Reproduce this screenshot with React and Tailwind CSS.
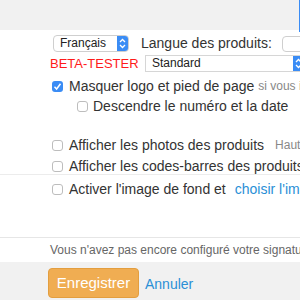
import React from "react";

const Stepper = () => (
  <div className="w-[11px] shrink-0 flex items-center justify-center bg-[#3a8cf5]">
    <svg width="7" height="11" viewBox="0 0 7 11" fill="none" stroke="white" strokeWidth="1.3">
      <path d="M1 4 L3.5 1.5 L6 4" />
      <path d="M1 7 L3.5 9.5 L6 7" />
    </svg>
  </div>
);

const Checkbox = ({ checked }) =>
  checked ? (
    <div className="w-[11px] h-[11px] rounded-[3px] bg-[#3a8cf5] flex items-center justify-center shrink-0">
      <svg width="9" height="9" viewBox="0 0 9 9" fill="none" stroke="white" strokeWidth="1.5">
        <path d="M1.5 4.8 L3.6 7 L7.5 1.8" />
      </svg>
    </div>
  ) : (
    <div className="w-[11px] h-[11px] rounded-[3px] border border-[#bdbdbd] bg-white shrink-0" />
  );

export default function App() {
  return (
    <div className="relative w-[300px] h-[300px] overflow-hidden bg-white whitespace-nowrap text-[#333] font-['Liberation_Sans',Arial,sans-serif]">
      {/* top band */}
      <div className="h-[30px] bg-[#f1f1f1]" />

      {/* langue */}
      <div className="mt-[5px] h-[17px] flex items-center pl-[53px]">
        <div className="w-[76px] h-[17px] shrink-0 flex border border-[#cfcfcf] rounded-[4px] overflow-hidden">
          <div className="flex-1 text-[12px] leading-[15px] pl-[6px] text-[#222]">Français</div>
          <Stepper />
        </div>
        <span className="ml-[12px] shrink-0 text-[14px]">Langue des produits:</span>
        <div className="ml-[10px] w-[40px] h-[16px] border border-[#cfcfcf] rounded-[4px] shrink-0" />
      </div>

      {/* beta */}
      <div className="mt-[3px] h-[17px] flex items-center pl-[50px]">
        <span className="w-[95px] shrink-0 text-[13px] text-[#ff1a1a]">BETA-TESTER</span>
        <div className="w-[160px] h-[17px] flex border border-[#d6d6d6] shrink-0">
          <div className="flex-1 text-[12px] leading-[15px] pl-[6px] text-[#222]">Standard</div>
          <Stepper />
        </div>
      </div>

      {/* masquer */}
      <div className="mt-[5px] h-[18px] flex items-center pl-[52px]">
        <Checkbox checked />
        <span className="ml-[6px] shrink-0 text-[14px]">Masquer logo et pied de page</span>
        <span className="ml-[4px] shrink-0 text-[12px] text-[#888]">si vous imprimez</span>
      </div>

      <div className="mt-[2px] h-[18px] flex items-center pl-[77px]">
        <Checkbox />
        <span className="ml-[5px] shrink-0 text-[14px]">Descendre le numéro et la date</span>
      </div>

      {/* photos */}
      <div className="mt-[22px] h-[16px] flex items-center pl-[52px]">
        <Checkbox />
        <span className="ml-[6px] shrink-0 text-[14px]">Afficher les photos des produits</span>
        <span className="ml-[11px] shrink-0 text-[12px] text-[#888]">Hauteur</span>
      </div>

      <div className="mt-[5px] h-[16px] flex items-center pl-[52px]">
        <Checkbox />
        <span className="ml-[6px] shrink-0 text-[14px]">Afficher les codes-barres des produits</span>
      </div>

      <div className="border-t border-[#ececec]" />

      <div className="mt-[6px] h-[16px] flex items-center pl-[52px]">
        <Checkbox />
        <span className="ml-[6px] shrink-0 text-[14px]">Activer l'image de fond et</span>
        <span className="ml-[9px] shrink-0 text-[14px] text-[#2a8fd6]">choisir l'image</span>
      </div>

      <div className="mt-[40px] border-t border-[#e6e6e6]" />

      <div className="h-[24px] flex items-center pl-[50px] text-[12px] text-[#666]">
        Vous n'avez pas encore configuré votre signature
      </div>

      {/* footer */}
      <div className="h-[38px] bg-[#f1f1f1] flex items-start pt-[6px] pl-[48px]">
        <button className="w-[91px] h-[30px] shrink-0 rounded-[4px] bg-[#f0ad52] border border-[#e39e3f] text-white text-[15px]">
          Enregistrer
        </button>
        <span className="ml-[6px] mt-[6px] text-[14px] text-[#2a8fd6]">Annuler</span>
      </div>

      {/* edge of neighbouring element */}
      <div className="absolute right-0 top-0 w-[1px] h-[32px] bg-[#3a8cf5]" />
    </div>
  );
}
